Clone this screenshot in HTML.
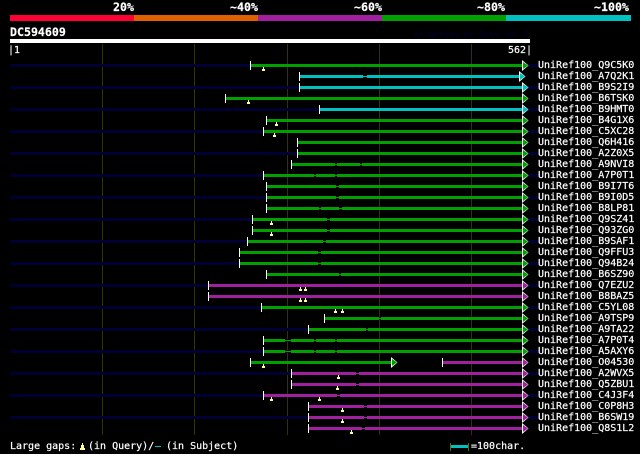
<!DOCTYPE html>
<html><head><meta charset="utf-8"><style>
html,body{margin:0;padding:0;background:#000;width:640px;height:454px;overflow:hidden}
svg{display:block}
text{font-family:"DejaVu Sans Mono","Liberation Mono",monospace;font-size:10px;fill:#fff;white-space:pre;stroke:#fff;stroke-width:.2px}
.b{font-weight:bold;font-size:11.6px}
.n{font-size:8.3px;fill:#000033;stroke:none}
</style></head><body>
<svg width="640" height="454" viewBox="0 0 640 454">
<defs>
<rect id="t" x="0" y="-3" width="1" height="9" fill="#fff"/>
<path id="m" fill="#ffff99" d="M1 3h1v2h1v2h-3v-2h1z"/>
<g id="a"><polygon fill="#fff" points="0,-4 6.5,1.5 0,7"/><polygon points="1,-2 6,1.5 1,5"/></g>
</defs>
<rect width="640" height="454" fill="#000"/>
<g fill="#333300"><rect x="102" y="44" width="1" height="391"/><rect x="194" y="44" width="1" height="391"/><rect x="287" y="44" width="1" height="391"/><rect x="379" y="44" width="1" height="391"/><rect x="471" y="44" width="1" height="391"/></g>
<rect x="10" y="15" width="124" height="6" fill="#ff0033"/><rect x="134" y="15" width="124" height="6" fill="#e06000"/><rect x="258" y="15" width="124" height="6" fill="#a020a0"/><rect x="382" y="15" width="124" height="6" fill="#00a000"/><rect x="506" y="15" width="125" height="6" fill="#00c0c0"/>
<text class="b" x="113" y="11">20%</text><text class="b" x="230" y="11">~40%</text><text class="b" x="354" y="11">~60%</text><text class="b" x="477" y="11">~80%</text><text class="b" x="594" y="11">~100%</text>
<text class="b" x="10" y="36">DC594609</text>
<text class="n" x="414" y="37">AlignView.pm Beta rel.7</text>
<rect x="10" y="39" width="520" height="4" fill="#fff"/>
<text x="8" y="53">|1</text><text x="508" y="53">562|</text>

<g fill="#000033"><rect x="10" y="64" width="240" height="3"/><rect x="528" y="64" width="11" height="3"/><rect x="10" y="86" width="289" height="3"/><rect x="528" y="86" width="11" height="3"/><rect x="10" y="108" width="309" height="3"/><rect x="528" y="108" width="11" height="3"/><rect x="10" y="130" width="253" height="3"/><rect x="528" y="130" width="11" height="3"/><rect x="10" y="152" width="287" height="3"/><rect x="528" y="152" width="11" height="3"/><rect x="10" y="174" width="253" height="3"/><rect x="528" y="174" width="11" height="3"/><rect x="10" y="196" width="256" height="3"/><rect x="528" y="196" width="11" height="3"/><rect x="10" y="218" width="242" height="3"/><rect x="528" y="218" width="11" height="3"/><rect x="10" y="240" width="237" height="3"/><rect x="528" y="240" width="11" height="3"/><rect x="10" y="262" width="229" height="3"/><rect x="528" y="262" width="11" height="3"/><rect x="10" y="284" width="198" height="3"/><rect x="528" y="284" width="11" height="3"/><rect x="10" y="306" width="251" height="3"/><rect x="528" y="306" width="11" height="3"/><rect x="10" y="328" width="298" height="3"/><rect x="528" y="328" width="11" height="3"/><rect x="10" y="350" width="253" height="3"/><rect x="528" y="350" width="11" height="3"/><rect x="10" y="372" width="281" height="3"/><rect x="528" y="372" width="11" height="3"/><rect x="10" y="394" width="253" height="3"/><rect x="528" y="394" width="11" height="3"/><rect x="10" y="416" width="298" height="3"/><rect x="528" y="416" width="11" height="3"/></g>

<g>
<g transform="translate(0,64)" fill="#00a000"><rect x="250" width="272" height="3"/><use href="#t" x="250"/><use href="#a" x="522"/><use href="#m" x="262"/><text x="538" y="4">UniRef100_Q9C5K0</text></g>
<g transform="translate(0,75)" fill="#00c0c0"><rect x="299" width="220" height="3"/><path fill="#000" d="M363 0h4v1h-4zM363 2h4v1h-4z"/><use href="#t" x="299"/><use href="#a" x="519"/><text x="538" y="4">UniRef100_A7Q2K1</text></g>
<g transform="translate(0,86)" fill="#00c0c0"><rect x="299" width="223" height="3"/><use href="#t" x="299"/><use href="#a" x="522"/><text x="538" y="4">UniRef100_B9S2I9</text></g>
<g transform="translate(0,97)" fill="#00a000"><rect x="225" width="297" height="3"/><use href="#t" x="225"/><use href="#a" x="522"/><use href="#m" x="247"/><text x="538" y="4">UniRef100_B6TSK0</text></g>
<g transform="translate(0,108)" fill="#00c0c0"><rect x="319" width="203" height="3"/><use href="#t" x="319"/><use href="#a" x="522"/><text x="538" y="4">UniRef100_B9HMT0</text></g>
<g transform="translate(0,119)" fill="#00a000"><rect x="266" width="256" height="3"/><use href="#t" x="266"/><use href="#a" x="522"/><use href="#m" x="275"/><text x="538" y="4">UniRef100_B4G1X6</text></g>
<g transform="translate(0,130)" fill="#00a000"><rect x="263" width="259" height="3"/><use href="#t" x="263"/><use href="#a" x="522"/><use href="#m" x="273"/><text x="538" y="4">UniRef100_C5XC28</text></g>
<g transform="translate(0,141)" fill="#00a000"><rect x="297" width="225" height="3"/><use href="#t" x="297"/><use href="#a" x="522"/><text x="538" y="4">UniRef100_Q6H416</text></g>
<g transform="translate(0,152)" fill="#00a000"><rect x="297" width="225" height="3"/><use href="#t" x="297"/><use href="#a" x="522"/><text x="538" y="4">UniRef100_A2Z0X5</text></g>
<g transform="translate(0,163)" fill="#00a000"><rect x="291" width="231" height="3"/><path fill="#000" d="M335 0h2v1h-2zM335 2h2v1h-2zM360 0h2v1h-2zM360 2h2v1h-2z"/><use href="#t" x="291"/><use href="#a" x="522"/><text x="538" y="4">UniRef100_A9NVI8</text></g>
<g transform="translate(0,174)" fill="#00a000"><rect x="263" width="259" height="3"/><path fill="#000" d="M314 0h2v1h-2zM314 2h2v1h-2zM335 0h2v1h-2zM335 2h2v1h-2z"/><use href="#t" x="263"/><use href="#a" x="522"/><text x="538" y="4">UniRef100_A7P0T1</text></g>
<g transform="translate(0,185)" fill="#00a000"><rect x="266" width="256" height="3"/><path fill="#000" d="M336 0h3v1h-3zM336 2h3v1h-3z"/><use href="#t" x="266"/><use href="#a" x="522"/><text x="538" y="4">UniRef100_B9I7T6</text></g>
<g transform="translate(0,196)" fill="#00a000"><rect x="266" width="256" height="3"/><path fill="#000" d="M336 0h3v1h-3zM336 2h3v1h-3z"/><use href="#t" x="266"/><use href="#a" x="522"/><text x="538" y="4">UniRef100_B9I0D5</text></g>
<g transform="translate(0,207)" fill="#00a000"><rect x="266" width="256" height="3"/><path fill="#000" d="M319 0h2v1h-2zM319 2h2v1h-2zM339 0h3v1h-3zM339 2h3v1h-3z"/><use href="#t" x="266"/><use href="#a" x="522"/><text x="538" y="4">UniRef100_B8LP81</text></g>
<g transform="translate(0,218)" fill="#00a000"><rect x="252" width="270" height="3"/><path fill="#000" d="M327 0h3v1h-3zM327 2h3v1h-3z"/><use href="#t" x="252"/><use href="#a" x="522"/><use href="#m" x="270"/><text x="538" y="4">UniRef100_Q9SZ41</text></g>
<g transform="translate(0,229)" fill="#00a000"><rect x="252" width="270" height="3"/><path fill="#000" d="M327 0h3v1h-3zM327 2h3v1h-3z"/><use href="#t" x="252"/><use href="#a" x="522"/><use href="#m" x="270"/><text x="538" y="4">UniRef100_Q93ZG0</text></g>
<g transform="translate(0,240)" fill="#00a000"><rect x="247" width="275" height="3"/><path fill="#000" d="M323 0h3v1h-3zM323 2h3v1h-3z"/><use href="#t" x="247"/><use href="#a" x="522"/><text x="538" y="4">UniRef100_B9SAF1</text></g>
<g transform="translate(0,251)" fill="#00a000"><rect x="239" width="283" height="3"/><path fill="#000" d="M318 0h3v1h-3zM318 2h3v1h-3z"/><use href="#t" x="239"/><use href="#a" x="522"/><text x="538" y="4">UniRef100_Q9FFU3</text></g>
<g transform="translate(0,262)" fill="#00a000"><rect x="239" width="283" height="3"/><path fill="#000" d="M318 0h3v1h-3zM318 2h3v1h-3z"/><use href="#t" x="239"/><use href="#a" x="522"/><text x="538" y="4">UniRef100_Q94B24</text></g>
<g transform="translate(0,273)" fill="#00a000"><rect x="266" width="256" height="3"/><path fill="#000" d="M339 0h2v1h-2zM339 2h2v1h-2z"/><use href="#t" x="266"/><use href="#a" x="522"/><text x="538" y="4">UniRef100_B6SZ90</text></g>
<g transform="translate(0,284)" fill="#a020a0"><rect x="208" width="314" height="3"/><use href="#t" x="208"/><use href="#a" x="522"/><use href="#m" x="299"/><use href="#m" x="304"/><text x="538" y="4">UniRef100_Q7EZU2</text></g>
<g transform="translate(0,295)" fill="#a020a0"><rect x="208" width="314" height="3"/><use href="#t" x="208"/><use href="#a" x="522"/><use href="#m" x="299"/><use href="#m" x="304"/><text x="538" y="4">UniRef100_B8BAZ5</text></g>
<g transform="translate(0,306)" fill="#00a000"><rect x="261" width="261" height="3"/><use href="#t" x="261"/><use href="#a" x="522"/><use href="#m" x="334"/><use href="#m" x="341"/><text x="538" y="4">UniRef100_C5YL08</text></g>
<g transform="translate(0,317)" fill="#00a000"><rect x="324" width="198" height="3"/><path fill="#000" d="M379 0h2v1h-2zM379 2h2v1h-2z"/><use href="#t" x="324"/><use href="#a" x="522"/><text x="538" y="4">UniRef100_A9TSP9</text></g>
<g transform="translate(0,328)" fill="#00a000"><rect x="308" width="214" height="3"/><path fill="#000" d="M366 0h2v1h-2zM366 2h2v1h-2z"/><use href="#t" x="308"/><use href="#a" x="522"/><text x="538" y="4">UniRef100_A9TA22</text></g>
<g transform="translate(0,339)" fill="#00a000"><rect x="263" width="259" height="3"/><path fill="#000" d="M285 0h6v1h-6zM285 2h6v1h-6zM314 0h2v1h-2zM314 2h2v1h-2zM335 0h2v1h-2zM335 2h2v1h-2z"/><use href="#t" x="263"/><use href="#a" x="522"/><text x="538" y="4">UniRef100_A7P0T4</text></g>
<g transform="translate(0,350)" fill="#00a000"><rect x="263" width="259" height="3"/><path fill="#000" d="M285 0h6v1h-6zM285 2h6v1h-6zM314 0h2v1h-2zM314 2h2v1h-2zM335 0h2v1h-2zM335 2h2v1h-2z"/><use href="#t" x="263"/><use href="#a" x="522"/><text x="538" y="4">UniRef100_A5AXY6</text></g>
<g transform="translate(0,361)" fill="#00a000"><rect x="250" width="141" height="3"/><use href="#t" x="250"/><use href="#a" x="391"/><use href="#m" x="262"/></g>
<g transform="translate(0,361)" fill="#a020a0"><rect x="442" width="80" height="3"/><use href="#t" x="442"/><use href="#a" x="522"/><text x="538" y="4">UniRef100_O04530</text></g>
<g transform="translate(0,372)" fill="#a020a0"><rect x="291" width="231" height="3"/><path fill="#000" d="M356 0h3v1h-3zM356 2h3v1h-3z"/><use href="#t" x="291"/><use href="#a" x="522"/><use href="#m" x="337"/><text x="538" y="4">UniRef100_A2WVX5</text></g>
<g transform="translate(0,383)" fill="#a020a0"><rect x="291" width="231" height="3"/><path fill="#000" d="M356 0h3v1h-3zM356 2h3v1h-3z"/><use href="#t" x="291"/><use href="#a" x="522"/><use href="#m" x="336"/><text x="538" y="4">UniRef100_Q5ZBU1</text></g>
<g transform="translate(0,394)" fill="#a020a0"><rect x="263" width="259" height="3"/><path fill="#000" d="M337 0h3v1h-3zM337 2h3v1h-3z"/><use href="#t" x="263"/><use href="#a" x="522"/><use href="#m" x="270"/><use href="#m" x="318"/><text x="538" y="4">UniRef100_C4J3F4</text></g>
<g transform="translate(0,405)" fill="#a020a0"><rect x="308" width="214" height="3"/><path fill="#000" d="M364 0h3v1h-3zM364 2h3v1h-3z"/><use href="#t" x="308"/><use href="#a" x="522"/><use href="#m" x="341"/><text x="538" y="4">UniRef100_C0P8H3</text></g>
<g transform="translate(0,416)" fill="#a020a0"><rect x="308" width="214" height="3"/><path fill="#000" d="M364 0h3v1h-3zM364 2h3v1h-3z"/><use href="#t" x="308"/><use href="#a" x="522"/><use href="#m" x="341"/><text x="538" y="4">UniRef100_B6SW19</text></g>
<g transform="translate(0,427)" fill="#a020a0"><rect x="308" width="214" height="3"/><path fill="#000" d="M362 0h3v1h-3zM362 2h3v1h-3z"/><use href="#t" x="308"/><use href="#a" x="522"/><use href="#m" x="350"/><text x="538" y="4">UniRef100_Q8S1L2</text></g>
</g>

<text x="10" y="449">Large gaps:</text>
<path fill="#ffff99" d="M82 443h1v2h1v3h1v2h-5v-2h1v-3h1z"/>
<text x="88" y="449">(in Query)/</text>
<rect x="155" y="446" width="6" height="1" fill="#00c0c0"/>
<text x="166" y="449">(in Subject)</text>
<rect x="450" y="443" width="1" height="8" fill="#666600"/><rect x="468" y="443" width="1" height="8" fill="#666600"/>
<rect x="451" y="445" width="17" height="3" fill="#00c0c0"/>
<text x="471" y="449">=100char.</text>
</svg>
</body></html>
